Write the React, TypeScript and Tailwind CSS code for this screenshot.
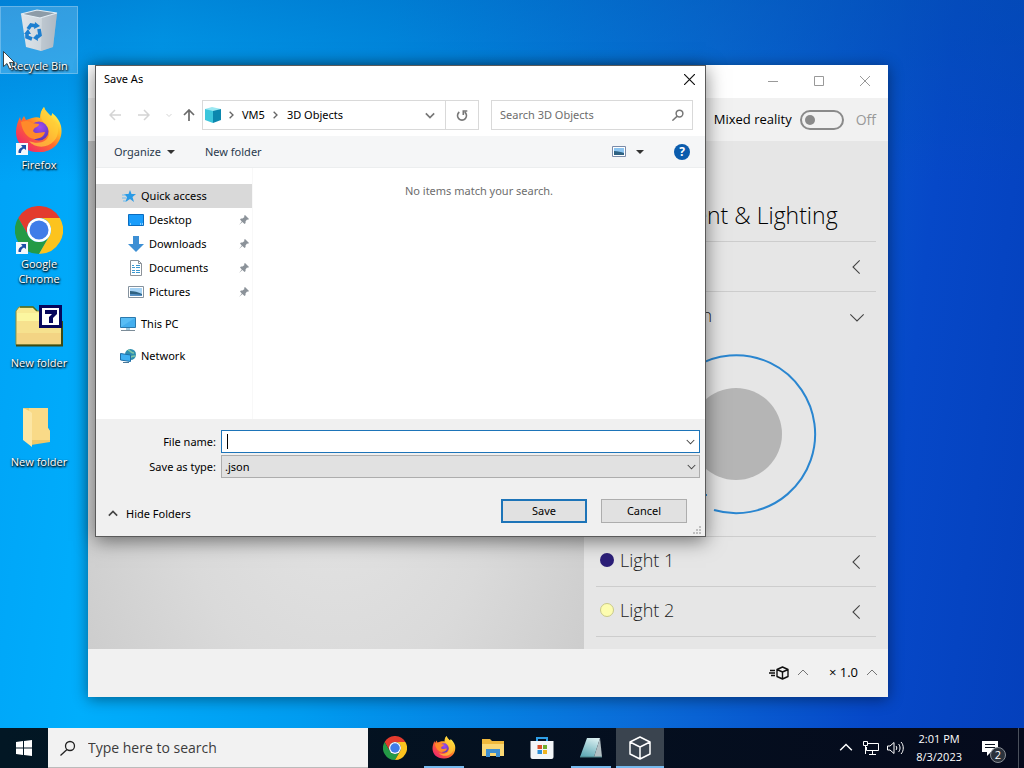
import { type ReactNode } from 'react';

const DESKTOP_ITEMS = [
  { label: 'Recycle Bin', icon: <RecycleBinIcon />, selected: true },
  { label: 'Firefox', icon: <FirefoxIcon className="size-12" />, shortcut: true },
  { label: 'Google Chrome', icon: <ChromeIcon className="size-12" />, shortcut: true },
  { label: 'New folder', icon: <SevenZipIcon /> },
  { label: 'New folder', icon: <DesktopFolderIcon /> },
];

const QUICK_ITEMS = [
  { label: 'Desktop', icon: <DesktopIcon /> },
  { label: 'Downloads', icon: <DownloadsIcon /> },
  { label: 'Documents', icon: <DocumentsIcon /> },
  { label: 'Pictures', icon: <PictureIcon /> },
];

const TASKS = [
  { label: 'Google Chrome', icon: <ChromeIcon className="size-6" /> },
  { label: 'Firefox', icon: <FirefoxIcon className="size-6" />, open: true },
  { label: 'File Explorer', icon: <ExplorerIcon /> },
  { label: 'Microsoft Store', icon: <StoreIcon /> },
  { label: 'Notepad', icon: <NotepadIcon />, open: true },
  { label: '3D Viewer', icon: <CubeIcon />, open: true, active: true },
];

/* ---------- icons ---------- */

function Chevron({ dir, size = 10, stroke = 1, className = '' }: { dir: 'up' | 'down' | 'left' | 'right'; size?: number; stroke?: number; className?: string }) {
  const points = {
    up: '1,8 6,3 11,8',
    down: '1,4 6,9 11,4',
    left: '8,1 3,6 8,11',
    right: '4,1 9,6 4,11',
  }[dir];
  return (
    <svg width={size} height={size} viewBox="0 0 12 12" fill="none" stroke="currentColor" strokeWidth={stroke} className={className}>
      <polyline points={points} />
    </svg>
  );
}

function RecycleBinIcon() {
  return (
    <svg viewBox="0 0 48 48" className="size-12">
      <defs>
        <linearGradient id="bin" x1="0" x2="1">
          <stop offset="0" stopColor="#dfe5ea" />
          <stop offset=".6" stopColor="#cdd6dd" />
          <stop offset="1" stopColor="#a6b4c0" />
        </linearGradient>
      </defs>
      <path d="M6 6 24 9 42 5 38 39 26 43 11 39z" fill="url(#bin)" />
      <path d="M27 9 42 5 38 39 26 43z" fill="#b3bdc6" opacity=".6" />
      <path d="M6 6 22 2 42 5 25 10z" fill="#8d9ca8" stroke="#e3edf4" strokeWidth="1.200" />
      <g fill="none" stroke="#1d7fd0" strokeWidth="3.600">
        <path d="M13 21 16 17 21 18" />
        <path d="M24 21 25 27 21 30" />
        <path d="M17 31 12 29 12 25" />
      </g>
      <path d="M20 14 25 18 19 21zM22 26 18 30 23 33zM9 26 13 21 16 26z" fill="#1d7fd0" />
    </svg>
  );
}

function FirefoxIcon({ className }: { className: string }) {
  return (
    <svg viewBox="0 0 48 48" className={className}>
      <defs>
        <linearGradient id="fx-body" x1=".85" y1=".1" x2=".15" y2=".9">
          <stop offset="0" stopColor="#fff44f" />
          <stop offset=".3" stopColor="#ffb627" />
          <stop offset=".55" stopColor="#ff6b2c" />
          <stop offset="1" stopColor="#f0286a" />
        </linearGradient>
        <radialGradient id="fx-globe" cx=".55" cy=".3" r=".8">
          <stop offset="0" stopColor="#a04bf0" />
          <stop offset="1" stopColor="#4c34b0" />
        </radialGradient>
      </defs>
      <path d="M29 0c1 4 4 6 7 9 1-1 1-2 1-3 4 3 8 8 9 13 3 14-7 26-21 26C11 46 1 37 1 25c0-6 2-11 4-15l1 4 3-5 2 4 6-2c3-1 6-1 8 0 0-4 1-8 4-11z" fill="url(#fx-body)" />
      <circle cx="24" cy="24" r="9.500" fill="url(#fx-globe)" />
      <path d="M6 15c5-2 9-1 11 1l7 1c0 3-4 3-5 5-2 2 0 4 3 4s5-1 8-1c-1 5-6 7-11 7-7-1-12-8-13-17z" fill="#ff8a2a" />
      <path d="M29 0c2 6 10 9 10 18 1-2 1-4 0-6 6 7 5 17 0 22-7 8-20 7-25 0 9 4 19 1 20-7 1-7-5-10-7-14-2-4-1-9 2-13z" fill="#ffce3a" opacity=".7" />
    </svg>
  );
}

function ChromeIcon({ className }: { className: string }) {
  return (
    <svg viewBox="0 0 48 48" className={className}>
      <path d="M24 12h20.800a24 24 0 0 0-41.600 0l10.400 18A12 12 0 0 1 24 12z" fill="#e33b2e" />
      <path d="M34.400 30 24 48A24 24 0 0 1 3.200 12l10.400 18a12 12 0 0 0 20.800 0z" fill="#249a46" />
      <path d="M34.400 30A12 12 0 0 0 24 12h20.800A24 24 0 0 1 24 48z" fill="#fcc31e" />
      <circle cx="24" cy="24" r="12" fill="#fff" />
      <circle cx="24" cy="24" r="9.500" fill="#3f7ce8" />
    </svg>
  );
}

function ShortcutIcon() {
  return (
    <svg viewBox="0 0 12 12" className="absolute bottom-0 left-[15px] size-3">
      <path d="M0 0h12v12H0z" fill="#f4f8fc" />
      <path d="M5 2h5v5L8 5.500C6 6 5 8 5 10H2.500C2 7 3.500 5 6.500 4z" fill="#1d50a8" />
    </svg>
  );
}

function SevenZipIcon() {
  return (
    <svg viewBox="0 0 48 48" className="size-12">
      <path d="M1 6 4 2h14l4 4h24v34H1z" fill="#f7ea94" stroke="#8f8a38" />
      <path d="M2 8h22v8H2z" fill="#fbf6a0" />
      <path d="M2 16h44v23H2z" fill="#f6e18e" />
      <path d="M2 28h44v11H2z" fill="#f3d484" />
      <path d="M1 40.500h46V16" fill="none" stroke="#3f4a12" strokeWidth="2" />
      <path d="M5 2h13l4 4" fill="none" stroke="#4d6b20" strokeWidth="1.500" />
      <path d="M25.500 1.500h20v20h-20z" fill="#fff" stroke="#06065c" strokeWidth="3" />
      <path d="M30 5h12v4l-4 4v5h-4v-6l3-3h-7z" fill="#06065c" />
    </svg>
  );
}

function DesktopFolderIcon() {
  return (
    <svg viewBox="0 0 48 48" className="size-12">
      <path d="M9 4h24v20l2 3v11l-19 3z" fill="#f0c869" />
      <path d="M14 4h19v20l2 3v9H14z" fill="#f9da88" />
      <path d="M8 4c3 1 7 3 9 5v34l-9-7z" fill="#fce6a4" />
    </svg>
  );
}

function ObjectsIcon() {
  return (
    <svg viewBox="0 0 16 16" className="size-4">
      <path d="M0 2 7 0l9 2-8 3z" fill="#9be8f2" />
      <path d="M0 2l8 2v12l-8-3z" fill="#3cc6dc" />
      <path d="M8 4l8-2v11l-8 3z" fill="#0b87ae" />
    </svg>
  );
}

function StarIcon() {
  return (
    <svg viewBox="0 0 14 14" className="size-3.5">
      <path d="M8 1 9.500 5H14l-3.500 3 1.500 5-4-3-4.500 3L5 8 2 5h4.500z" fill="#2a9be6" />
      <path d="M0 6h4M0 9h4M1 12h3" stroke="#6fbdf0" />
    </svg>
  );
}

function DesktopIcon() {
  return (
    <svg viewBox="0 0 16 16" className="size-4">
      <path d="M.5 2.500h15v11H.5z" fill="#1a9dfb" stroke="#0a6cc0" />
      <path d="M2 12h1m9 0h1m1 0h1" stroke="#fff" />
    </svg>
  );
}

function DownloadsIcon() {
  return (
    <svg viewBox="0 0 16 16" className="size-4">
      <path d="M5 0h6v8h5l-8 8-8-8h5z" fill="#3d8fd4" />
    </svg>
  );
}

function DocumentsIcon() {
  return (
    <svg viewBox="0 0 16 16" className="size-4">
      <path d="M2.500.5h8l3 3v12h-11z" fill="#fff" stroke="#8c9299" />
      <path d="M10.500.5v3h3" fill="none" stroke="#8c9299" />
      <path d="M4 5.500h2m2 0h4M4 7.500h3m1 0h4M4 10.500h3m1 0h4M4 12.500h3m1 0h4" stroke="#3b97cf" />
    </svg>
  );
}

function PictureIcon() {
  return (
    <svg viewBox="0 0 16 16" className="size-4">
      <path d="M.5 2.500h15v11H.5z" fill="#fff" stroke="#85929e" />
      <path d="M2 4h12v8H2z" fill="#a6d3f5" />
      <path d="M2 7c4 0 8 1 12 3v2H2z" fill="#2f6282" />
      <path d="M2 10c4 0 8 0 12 1v1H2z" fill="#558fc4" />
    </svg>
  );
}

function PcIcon() {
  return (
    <svg viewBox="0 0 16 16" className="size-4">
      <path d="M.5 1.500h15v10H.5z" fill="#58bdf5" stroke="#2b79ad" />
      <path d="M1 11 15 2v9z" fill="#2ea0e8" opacity=".5" />
      <path d="M6 12h4v2H6z" fill="#9dc9e0" />
      <path d="M1 14.500h14" stroke="#7c8c98" />
    </svg>
  );
}

function NetworkIcon() {
  return (
    <svg viewBox="0 0 16 16" className="size-4">
      <circle cx="10.500" cy="6.500" r="5.500" fill="#2f8fb0" />
      <path d="M8 2c3 1 3 3 6 3m-4 5c1-2 3-2 5-2" stroke="#7fc5a6" fill="none" strokeWidth="1.500" />
      <path d="M.5 5.500 10.500 7v6.500L.5 12z" fill="#3fb0f2" stroke="#1f6ea6" />
      <path d="M3 14.500h6" stroke="#47789a" />
    </svg>
  );
}

function PinIcon() {
  return (
    <svg viewBox="0 0 10 10" className="size-2.5">
      <path d="M6 0l4 4-1 .8-1-.3L6.500 6.500 6.600 8l-1 1L3.400 7 0 10l2.800-3.500L1 4.500l1-1 1.500.1L5.500 2 5 1z" fill="#8b9299" />
    </svg>
  );
}

function ExplorerIcon() {
  return (
    <svg viewBox="0 0 24 24" className="size-6">
      <path d="M1 3h8l2 2h12v15H1z" fill="#f0b93c" />
      <path d="M1 8h22v12H1z" fill="#fbd874" />
      <path d="M5 21v-8h14v8h-4v-4H9v4z" fill="#3f8fd0" />
    </svg>
  );
}

function StoreIcon() {
  return (
    <svg viewBox="0 0 24 24" className="size-6">
      <path d="M7 6V2h10v4" fill="none" stroke="#2f9fe6" strokeWidth="2" />
      <path d="M.5 5h23v16a2 2 0 0 1-2 2h-19a2 2 0 0 1-2-2z" fill="#f3f6f8" />
      <path d="M7.500 9H12v4H7.500z" fill="#d9512c" />
      <path d="M13 9h4v4h-4z" fill="#6fae2e" />
      <path d="M7.500 14H12v4H7.500z" fill="#2c8fd6" />
      <path d="M13 14h4v4h-4z" fill="#f0b41f" />
    </svg>
  );
}

function NotepadIcon() {
  return (
    <svg viewBox="0 0 24 24" className="size-6">
      <defs>
        <linearGradient id="pad" x1=".7" y1="0" x2=".3" y2="1">
          <stop offset="0" stopColor="#d8eef0" />
          <stop offset="1" stopColor="#5fa9b5" />
        </linearGradient>
      </defs>
      <path d="M8 2h13l-6 19H1z" fill="url(#pad)" />
      <path d="M21 2l2 19h-8z" fill="#b3c0c4" />
      <path d="M1 21h22" stroke="#4b8187" />
    </svg>
  );
}

function CubeIcon() {
  return (
    <svg viewBox="0 0 24 24" fill="none" stroke="#fff" strokeWidth="1.500" strokeLinejoin="round" className="size-6">
      <path d="M12 1l10 5v12l-10 5-10-5V6zM2 6l10 5 10-5M12 11v12" />
    </svg>
  );
}

function MagnifierIcon({ className, stroke }: { className: string; stroke: number }) {
  return (
    <svg viewBox="0 0 16 16" fill="none" stroke="currentColor" strokeWidth={stroke} className={className}>
      <circle cx="10" cy="6" r="4.500" />
      <path d="M7 9.500.5 15.500" />
    </svg>
  );
}

/* ---------- desktop ---------- */

function DesktopShortcuts() {
  return (
    <div className="flex w-[78px] flex-col pt-1.5">
      {DESKTOP_ITEMS.map(({ label, icon, selected, shortcut }, i) => (
        <div key={i} className="h-[99px]">
          <button
            className={`relative flex w-full flex-col items-center gap-0.5 border px-1 pt-px ${
              selected ? 'border-white/25 bg-white/20' : 'border-transparent'
            }`}
          >
            {icon}
            {shortcut && (
              <span className="absolute top-[37px] left-0 h-3">
                <ShortcutIcon />
              </span>
            )}
            <span className="text-[11px] leading-[15px] text-white [text-shadow:1px_1px_2px_#000,0_1px_2px_#000]">{label}</span>
          </button>
        </div>
      ))}
    </div>
  );
}

/* ---------- 3D viewer window ---------- */

function PanelRow({ label, dot, open, children }: { label: string; dot?: string; open?: boolean; children?: ReactNode }) {
  return (
    <section className="border-b border-[#cdcdcd]">
      <button className="flex h-[49px] w-full items-center gap-1.5 pr-[11px] pl-1 text-lg font-light text-[#222]">
        {dot && <span className={`mb-1 size-3.5 rounded-full ${dot}`} />}
        <span className="flex-1 pb-1 text-left">{label}</span>
        <Chevron dir={open ? 'down' : 'left'} size={16} stroke={0.8} className="text-[#444]" />
      </button>
      {children}
    </section>
  );
}

function RotationDial() {
  return (
    <div className="flex h-[195px] justify-center pt-3">
      <svg viewBox="0 0 162 162" fill="none" className="size-[162px]">
        <circle cx="81" cy="81" r="46" fill="#b5b5b5" />
        <path d="M59 157A79 79 0 1 0 36 146" stroke="#2a86d0" strokeWidth="2" />
        <path d="M44 142h8" stroke="#2a86d0" strokeWidth="2" />
      </svg>
    </div>
  );
}

function ViewerWindow() {
  return (
    <div className="absolute top-[65px] right-[136px] bottom-[31px] left-[88px] flex flex-col bg-[#f1f1f1] shadow-[0_2px_14px_rgba(0,0,0,0.45)]">
      <header className="flex h-[33px] shrink-0 items-center justify-end bg-white pb-0.5 text-[#999]">
        <button aria-label="Minimize" className="flex w-[46px] justify-center">
          <svg viewBox="0 0 10 10" className="size-2.5" stroke="currentColor"><path d="M0 5.500h10" /></svg>
        </button>
        <button aria-label="Maximize" className="flex w-[46px] justify-center">
          <svg viewBox="0 0 10 10" className="size-2.5" fill="none" stroke="currentColor"><path d="M.5.5h9v9h-9z" /></svg>
        </button>
        <button aria-label="Close" className="flex w-[46px] justify-center">
          <svg viewBox="0 0 10 10" className="size-2.5" stroke="currentColor"><path d="M0 0l10 10M10 0 0 10" /></svg>
        </button>
      </header>

      <div className="flex h-[43px] shrink-0 items-center justify-end gap-2 pr-3">
        <label htmlFor="mixed-reality" className="text-[13px] text-black">Mixed reality</label>
        <input
          id="mixed-reality"
          type="checkbox"
          role="switch"
          className="flex h-5 w-11 appearance-none items-center rounded-full border-2 border-[#8a8a8a] pl-[3px] before:size-2.5 before:rounded-full before:bg-[#8a8a8a]"
        />
        <span className="ml-1 text-sm text-[#999]">Off</span>
      </div>

      <div className="flex min-h-0 flex-1">
        <div className="flex-1 bg-[radial-gradient(ellipse_at_50%_65%,#e4e4e4_0%,#dadada_45%,#c6c6c6_100%)]" />
        <aside className="w-[304px] overflow-hidden bg-[#e6e6e6] px-3">
          <h2 className="flex h-[101px] items-end border-b border-[#cdcdcd] pb-2.5 text-[23px] leading-8 font-light whitespace-nowrap text-black">
            Environment &amp; Lighting
          </h2>
          <PanelRow label="Environment" />
          <PanelRow label="Light Rotation" open>
            <RotationDial />
          </PanelRow>
          <PanelRow label="Light 1" dot="bg-[#2c1f78]" />
          <PanelRow label="Light 2" dot="border border-[#c9c98a] bg-[#fdfdb0]" />
        </aside>
      </div>

      <footer className="flex h-12 shrink-0 items-center justify-end pr-2.5 text-[13px] text-black">
        <button aria-label="Quick animation" className="flex items-center gap-2">
          <svg viewBox="0 0 20 14" fill="none" stroke="#111" strokeWidth="1.400" strokeLinejoin="round" className="h-3.5 w-5">
            <path d="M13.500 1l5.500 2.500v7L13.500 13 8 10.500v-7zM8 3.500 13.500 6 19 3.500M13.500 6v7M1 4.500h5M0 7h6M2 9.500h4" />
          </svg>
          <Chevron dir="up" size={12} stroke={0.8} className="text-[#555]" />
        </button>
        <button className="ml-5 flex items-center gap-2">
          <span>× 1.0</span>
          <Chevron dir="up" size={12} stroke={0.8} className="text-[#555]" />
        </button>
      </footer>
    </div>
  );
}

/* ---------- save dialog ---------- */

function AddressRow() {
  return (
    <div className="flex items-center px-3 py-1.5">
      <div className="flex w-[94px] shrink-0 items-center text-[#d4d4d4]">
        <button aria-label="Back" className="flex w-[13px] justify-center">
          <svg viewBox="0 0 12 12" fill="none" stroke="currentColor" strokeWidth="1.500" className="size-3"><path d="M12 6H1M6 1 1 6l5 5" /></svg>
        </button>
        <button aria-label="Forward" className="ml-4 flex w-[13px] justify-center">
          <svg viewBox="0 0 12 12" fill="none" stroke="currentColor" strokeWidth="1.500" className="size-3"><path d="M0 6h11M6 1l5 5-5 5" /></svg>
        </button>
        <button aria-label="Recent locations" className="ml-4 flex w-1.5 justify-center">
          <Chevron dir="down" size={6} stroke={2} />
        </button>
        <button aria-label="Up" className="ml-[11px] flex text-[#6a6a6a]">
          <svg viewBox="0 0 12 12" fill="none" stroke="currentColor" strokeWidth="1.700" className="size-3"><path d="M6 12V1M1 6l5-5 5 5" /></svg>
        </button>
      </div>
      <div className="flex h-[30px] min-w-0 flex-1 items-center border border-[#d9d9d9] pl-0.5">
        <ObjectsIcon />
        <Chevron dir="right" size={8} stroke={2} className="ml-1.5 text-[#666]" />
        <button className="ml-[7px]">VM5</button>
        <Chevron dir="right" size={8} stroke={2} className="ml-1.5 text-[#666]" />
        <button className="ml-2 flex-1 text-left">3D Objects</button>
        <button aria-label="Previous locations" className="mr-2.5 text-[#777]">
          <Chevron dir="down" size={10} stroke={2} />
        </button>
        <button aria-label="Refresh" className="flex h-full w-[33px] items-center justify-center border-l border-[#d9d9d9] text-[#777]">
          <svg viewBox="0 0 12 12" fill="none" stroke="currentColor" strokeWidth="1.600" className="size-3">
            <path d="M3.300 3A4.500 4.500 0 1 0 8.700 3M7.300 6V2h4" />
          </svg>
        </button>
      </div>
      <div className="ml-3 flex h-[30px] w-[202px] items-center border border-[#d9d9d9] px-2">
        <input type="search" aria-label="Search 3D Objects" placeholder="Search 3D Objects" className="min-w-0 flex-1 outline-none placeholder:text-[#6d6d6d]" />
        <MagnifierIcon stroke={2} className="size-3 text-[#777]" />
      </div>
    </div>
  );
}

function NavPane() {
  return (
    <nav className="w-[157px] shrink-0 border-r border-[#f8f8f8] pt-4">
      <a href="#quick" className="flex h-6 items-center gap-[5px] bg-[#d9d9d9] pl-[26px]">
        <StarIcon />
        Quick access
      </a>
      {QUICK_ITEMS.map(({ label, icon }) => (
        <a key={label} href={`#${label}`} className="flex h-6 items-center gap-[5px] pr-[3px] pl-8">
          {icon}
          <span className="flex-1">{label}</span>
          <PinIcon />
        </a>
      ))}
      <a href="#pc" className="mt-2 flex h-6 items-center gap-[5px] pl-6">
        <PcIcon />
        This PC
      </a>
      <a href="#network" className="mt-2 flex h-6 items-center gap-[5px] pl-6">
        <NetworkIcon />
        Network
      </a>
    </nav>
  );
}

function SaveDialog() {
  return (
    <div role="dialog" aria-label="Save As" className="absolute top-[65px] right-[318px] left-[95px] border border-[#5a5a5a] bg-white font-['Noto_Sans','Open_Sans',sans-serif] text-[11px] leading-4 text-black shadow-[0_4px_18px_rgba(0,0,0,0.5)]">
      <header className="flex h-7 items-center justify-between pr-2.5 pb-0.5 pl-2">
        <h1>Save As</h1>
        <button aria-label="Close">
          <svg viewBox="0 0 11 11" className="size-[11px]" stroke="#111" strokeWidth="1.200"><path d="M0 0l11 11M11 0 0 11" /></svg>
        </button>
      </header>

      <AddressRow />

      <div className="flex h-8 items-center border-b border-[#eceeef] bg-[#f5f6f7] pr-[15px] pl-[18px] text-[#2b3a4d]">
        <button className="flex items-center gap-1.5">
          Organize
          <svg viewBox="0 0 8 4" className="h-1 w-2"><path d="M0 0h8L4 4z" fill="#333" /></svg>
        </button>
        <button className="ml-[30px] flex-1 text-left">New folder</button>
        <button aria-label="Change your view">
          <svg viewBox="0 0 14 11" className="h-[11px] w-3.5">
            <path d="M.5.5h13v10H.5z" fill="#fff" stroke="#7b8ba8" />
            <path d="M2 2h10v7H2z" fill="#8cc4f0" />
            <path d="M2 5c4 0 7 1 10 2v2H2z" fill="#2f6282" />
          </svg>
        </button>
        <button aria-label="More options" className="ml-2.5">
          <svg viewBox="0 0 8 4" className="h-1 w-2"><path d="M0 0h8L4 4z" fill="#333" /></svg>
        </button>
        <button aria-label="Help" className="ml-[30px] flex size-4 items-center justify-center rounded-full bg-[#0b5cad] text-xs font-bold text-white">?</button>
      </div>

      <div className="flex min-h-[251px]">
        <NavPane />
        <p className="flex-1 pt-[15px] text-center text-[#6d6d6d]">No items match your search.</p>
      </div>

      <div className="relative bg-[#f0f0f0] pt-[11px] pr-[5px] pb-[13px] pl-3">
        <div className="flex items-center">
          <label htmlFor="file-name" className="w-[113px] pr-[5px] text-right">File name:</label>
          <div className="relative flex h-[23px] flex-1 items-center border border-[#1d74b8] bg-white">
            <span className="absolute top-[3px] left-[5px] h-[15px] w-px bg-black" />
            <input id="file-name" type="text" className="h-full min-w-0 flex-1 pl-1 outline-none" />
            <button aria-label="Show file names" className="px-1 text-[#444]"><Chevron dir="down" size={9} stroke={1.4} /></button>
          </div>
        </div>
        <div className="mt-0.5 flex items-center">
          <label htmlFor="file-type" className="w-[113px] pr-[5px] text-right">Save as type:</label>
          <div className="relative flex-1">
            <select id="file-type" className="block h-[23px] w-full appearance-none border border-[#adadad] bg-[#e1e1e1] pl-[3px]">
              <option>.json</option>
            </select>
            <Chevron dir="down" size={9} stroke={1.4} className="pointer-events-none absolute top-[7px] right-[4px] text-[#444]" />
          </div>
        </div>
        <div className="mt-[21px] flex items-center gap-3.5 pr-[13px]">
          <button className="mt-1.5 flex flex-1 items-center gap-2">
            <Chevron dir="up" size={10} stroke={2} className="text-[#444]" />
            Hide Folders
          </button>
          <button className="h-6 w-[86px] border-2 border-[#1d74b8] bg-[#e1e1e1]">Save</button>
          <button className="h-6 w-[86px] border border-[#adadad] bg-[#e1e1e1]">Cancel</button>
        </div>
        <svg viewBox="0 0 8 8" className="absolute right-1 bottom-0.5 size-2" fill="#c0c0c0">
          <path d="M6 0h2v2H6zM3 3h2v2H3zM6 3h2v2H6zM0 6h2v2H0zM3 6h2v2H3zM6 6h2v2H6z" />
        </svg>
      </div>
    </div>
  );
}

/* ---------- taskbar ---------- */

function Taskbar() {
  return (
    <footer className="relative z-10 flex h-10 shrink-0 items-stretch bg-linear-to-r from-[#021724] to-[#050a1c] text-white">
      <button aria-label="Start" className="flex w-12 items-center justify-center">
        <svg viewBox="0 0 16 16" className="size-4" fill="#fff">
          <path d="M0 2l7-1v6.500H0zM8 1l8-1v7.500H8zM0 8.500h7V15l-7-1zM8 8.500h8V16l-8-1z" />
        </svg>
      </button>
      <div className="flex w-80 items-center gap-3 border-b border-[#bbb] bg-[#f2f2f2] pl-3 text-[#222]">
        <MagnifierIcon stroke={1.3} className="size-4" />
        <input type="search" aria-label="Type here to search" placeholder="Type here to search" className="min-w-0 flex-1 text-sm outline-none placeholder:text-[#3c3c3c]" />
      </div>
      <div className="ml-[3px] flex gap-px">
        {TASKS.map(({ label, icon, open, active }) => (
          <button key={label} aria-label={label} className={`relative flex w-12 items-center justify-center ${active ? 'bg-[#3a444f]' : ''}`}>
            {icon}
            {open && <span className={`absolute bottom-0 h-0.5 bg-[#76b9ed] ${active ? 'w-12' : 'w-10'}`} />}
          </button>
        ))}
      </div>
      <div className="ml-auto flex items-center">
        <button aria-label="Show hidden icons"><Chevron dir="up" size={14} stroke={1.2} /></button>
        <button aria-label="Network" className="ml-2.5">
          <svg viewBox="0 0 16 14" fill="none" stroke="#fff" className="h-3.5 w-4">
            <path d="M5 2.500h10.500v7H3.500V6M.5.5h4v4h-4zM2.500 5v8M9.500 10v3M6 13.500h7" />
          </svg>
        </button>
        <button aria-label="Volume" className="ml-2">
          <svg viewBox="0 0 17 14" fill="none" stroke="#fff" className="h-3.5 w-[17px]">
            <path d="M.5 5v4h2.500l4 3.500v-11L3 5zM9 5c1 1 1 3 0 4M11.500 3c2 2 2 6 0 8M14 1c3 3 3 9 0 12" />
          </svg>
        </button>
        <button className="ml-3 text-center text-[11px] leading-[18px]">
          2:01 PM
          <br />
          8/3/2023
        </button>
        <button aria-label="2 notifications" className="relative ml-5">
          <svg viewBox="0 0 16 16" className="size-4">
            <path d="M0 1h16v11H9l-4 4v-4H0z" fill="#fff" />
            <path d="M3 4.500h10M3 7.500h10" stroke="#0a1220" />
          </svg>
          <span className="absolute top-[7px] left-2 flex size-4 items-center justify-center rounded-full border border-[#8a8f96] bg-[#2b323c] text-[11px]">2</span>
        </button>
        <span className="ml-5 h-10 w-1.5 border-l border-[#4a505c]" />
      </div>
    </footer>
  );
}

export default function App() {
  return (
    <div className="flex min-h-screen flex-col overflow-hidden font-['Open_Sans','Noto_Sans',sans-serif]">
      <main className="relative flex-1 bg-[linear-gradient(180deg,#0050a866_0%,#0050a800_25%),linear-gradient(97deg,#00a2f6_0%,#00aefc_15%,#009cf0_35%,#0a6cd8_65%,#0648c8_86%,#0440bc_100%)]">
        <DesktopShortcuts />
        <ViewerWindow />
        <SaveDialog />
        <svg viewBox="0 0 12 19" className="absolute top-[51px] left-[3px] h-[19px] w-3">
          <path d="M.5.5v15l3.500-3 2.500 5.500 2.500-1-2.500-5.500h5z" fill="#fff" stroke="#222" strokeWidth=".8" />
        </svg>
      </main>
      <Taskbar />
    </div>
  );
}
